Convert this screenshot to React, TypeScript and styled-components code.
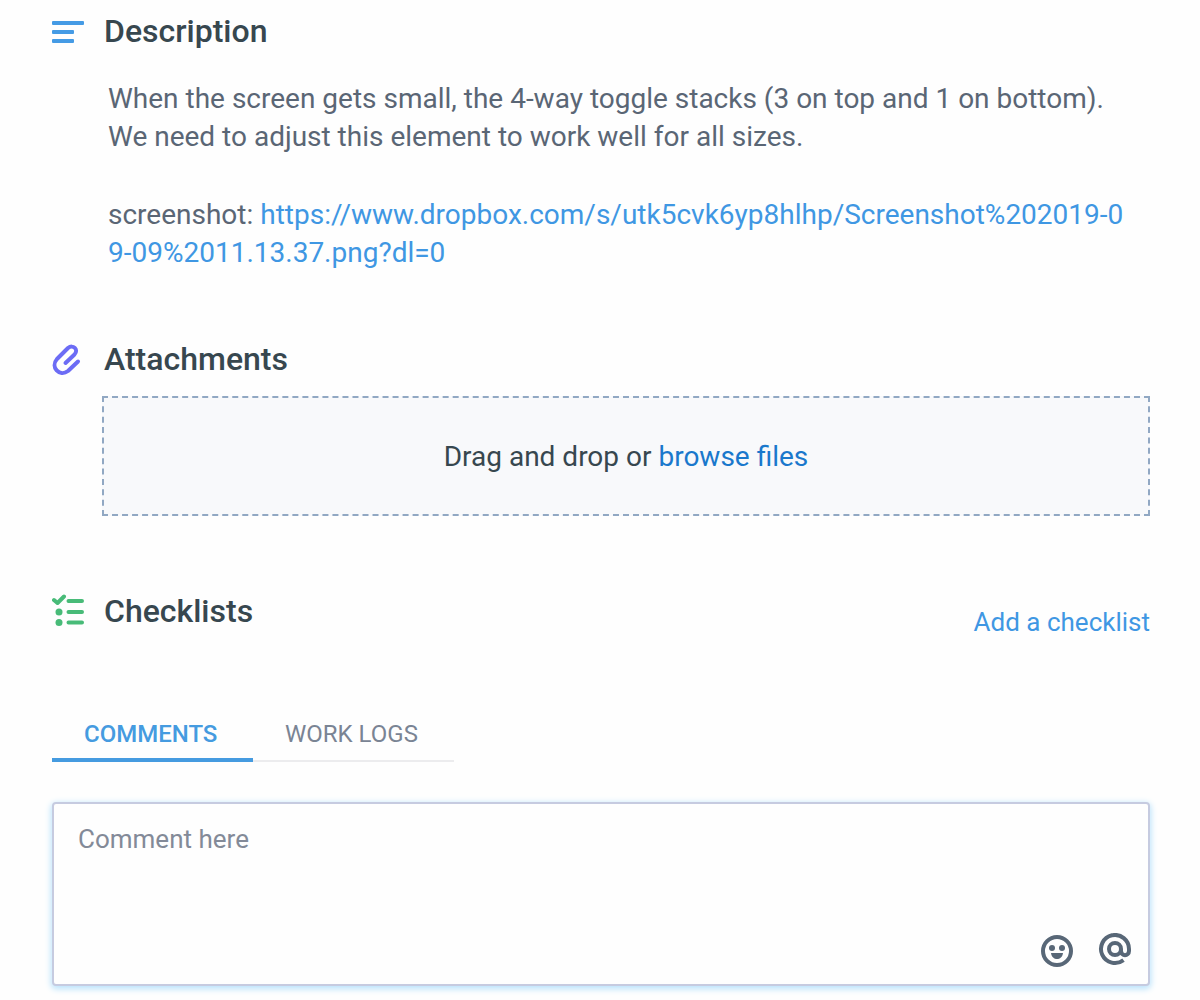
import React from "react";
import styled, { createGlobalStyle } from "styled-components";

const GlobalStyle = createGlobalStyle`
  *, *::before, *::after { box-sizing: border-box; }
  body {
    margin: 0;
    background: #fefefe;
    color: #37474f;
    font-family: Roboto, "Liberation Sans", sans-serif;
  }
`;

const Page = styled.main`
  padding: 11px 50px 14px 52px;
`;

const Section = styled.section<{ $space: number }>`
  margin-bottom: ${(p) => p.$space}px;
`;

const Header = styled.header`
  display: flex;
  align-items: center;
  height: 40px;
`;

const IconSlot = styled.span`
  display: flex;
  flex: none;
  width: 52px;
`;

const Title = styled.h2`
  flex: 1;
  margin: 0;
  font-size: 32px;
  line-height: 40px;
  font-weight: 500;
  color: #37474f;
`;

const Body = styled.div`
  display: flex;
  flex-direction: column;
  gap: 40px;
  padding: 29px 24px 0 56px;
  font-size: 28px;
  line-height: 38px;
  color: #5a6675;
`;

const Paragraph = styled.p`
  margin: 0;
`;

const Link = styled.a`
  color: #3f97e3;
  text-decoration: none;
  word-break: break-all;
`;

const DropZone = styled.div`
  display: flex;
  align-items: center;
  justify-content: center;
  gap: 7px;
  height: 120px;
  margin: 17px 0 0 50px;
  border: 2px dashed #91a8c3;
  background: #f8f9fb;
  font-size: 28px;
`;

const TextButton = styled.button<{ $color: string; $size: number }>`
  padding: 0;
  border: 0;
  background: none;
  font: inherit;
  font-size: ${(p) => p.$size}px;
  font-weight: 400;
  color: ${(p) => p.$color};
  cursor: pointer;
`;

const ChecklistHeader = styled(Header)`
  height: 51px;
  align-items: flex-start;
`;

const ChecklistAction = styled.div`
  align-self: flex-end;
  display: flex;
  line-height: 40px;
`;

const ChecklistIcon = styled(IconSlot)`
  height: 40px;
  align-items: center;
`;

const Tabs = styled.div`
  display: flex;
  margin-bottom: 40px;
`;

const Tab = styled.button<{ $active?: boolean }>`
  width: 201px;
  height: 56px;
  padding: 4px 32px ${(p) => (p.$active ? 0 : 2)}px;
  border: 0;
  border-bottom: ${(p) => (p.$active ? "4px solid #459be0" : "2px solid #ececee")};
  background: none;
  font: inherit;
  font-size: 24px;
  font-weight: ${(p) => (p.$active ? 500 : 400)};
  text-align: left;
  white-space: nowrap;
  color: ${(p) => (p.$active ? "#459be0" : "#7a8494")};
  cursor: pointer;
`;

const Composer = styled.div`
  position: relative;
  display: flex;
`;

const CommentBox = styled.textarea`
  display: block;
  width: 100%;
  height: 184px;
  padding: 19px 24px;
  border: 2px solid #c6cbe0;
  border-radius: 4px;
  outline: 0;
  resize: none;
  background: #fefefe;
  box-shadow: 0 2px 6px 1px #b9e2fb;
  font: inherit;
  font-size: 26px;
  line-height: 32px;
  color: #37474f;
  &::placeholder { color: #838a98; opacity: 1; }
`;

const Tools = styled.div`
  position: absolute;
  right: 18px;
  bottom: 19px;
  display: flex;
  gap: 24px;
`;

const ToolButton = styled.button`
  display: flex;
  padding: 0;
  border: 0;
  background: none;
  color: #586777;
  cursor: pointer;
`;

const LinesIcon = () => (
  <svg width="32" height="24" viewBox="0 0 32 24" fill="#459be5" aria-hidden="true">
    <rect x="0" y="2" width="32" height="4" rx="1" />
    <rect x="0" y="11" width="22" height="4" rx="1" />
    <rect x="0" y="20" width="22" height="4" rx="1" />
  </svg>
);

const ClipIcon = () => (
  <svg width="32" height="36" viewBox="0 0 32 36" fill="none" stroke="#6c6cf5" strokeWidth="4" strokeLinecap="round" strokeLinejoin="round" aria-hidden="true">
    <path d="M13.500 22 22.500 13.500C27 8.500 21 3 16 7L5 18C-2 26 7.500 36.500 16 30L26 20.500" />
  </svg>
);

const ChecksIcon = () => (
  <svg width="32" height="34" viewBox="0 0 32 34" fill="none" stroke="#48bb78" strokeWidth="4" strokeLinecap="round" strokeLinejoin="round" aria-hidden="true">
    <path d="M2 6 5.500 9 12 2.500M16.500 7h13.500M16.500 18h13.500M16.500 28.500h13.500" />
    <circle cx="7" cy="18" r="3.500" fill="#48bb78" stroke="none" />
    <circle cx="7" cy="28.500" r="3.500" fill="#48bb78" stroke="none" />
  </svg>
);

const SmileIcon = () => (
  <svg width="34" height="34" viewBox="0 0 34 34" fill="currentColor" aria-hidden="true">
    <circle cx="17" cy="18" r="14" fill="none" stroke="currentColor" strokeWidth="4" />
    <circle cx="12" cy="15" r="3" />
    <circle cx="22" cy="15" r="3" />
    <path d="M11 20h12c-1 8-11 8-12 0z" />
  </svg>
);

const AtIcon = () => (
  <svg width="34" height="34" viewBox="0 0 34 34" fill="none" stroke="currentColor" strokeWidth="4" aria-hidden="true">
    <circle cx="17" cy="16" r="6" />
    <path d="M25.500 27.100A14 14 0 1 1 31 16v2c0 5.500-8 5.500-8 0v-2" />
  </svg>
);

export default function App() {
  return (
    <>
      <GlobalStyle />
      <Page>
        <Section $space={67}>
          <Header>
            <IconSlot><LinesIcon /></IconSlot>
            <Title>Description</Title>
          </Header>
          <Body>
            <Paragraph>
              When the screen gets small, the 4-way toggle stacks (3 on top and 1 on bottom).
              <br />
              We need to adjust this element to work well for all sizes.
            </Paragraph>
            <Paragraph>
              screenshot:{" "}
              <Link href="https://www.dropbox.com/s/utk5cvk6yp8hlhp/Screenshot%202019-09-09%2011.13.37.png?dl=0">
                https://www.dropbox.com/s/utk5cvk6yp8hlhp/Screenshot%202019-09-09%2011.13.37.png?dl=0
              </Link>
            </Paragraph>
          </Body>
        </Section>

        <Section $space={75}>
          <Header>
            <IconSlot><ClipIcon /></IconSlot>
            <Title>Attachments</Title>
          </Header>
          <DropZone>
            <span>Drag and drop or</span>
            <TextButton type="button" $color="#1a78cc" $size={28}>browse files</TextButton>
          </DropZone>
        </Section>

        <Section $space={64}>
          <ChecklistHeader>
            <ChecklistIcon><ChecksIcon /></ChecklistIcon>
            <Title>Checklists</Title>
            <ChecklistAction>
              <TextButton type="button" $color="#3f97e3" $size={26}>Add a checklist</TextButton>
            </ChecklistAction>
          </ChecklistHeader>
        </Section>

        <Tabs role="tablist">
          <Tab type="button" role="tab" aria-selected="true" $active>COMMENTS</Tab>
          <Tab type="button" role="tab" aria-selected="false">WORK LOGS</Tab>
        </Tabs>

        <Composer>
          <CommentBox aria-label="Comment" placeholder="Comment here" />
          <Tools>
            <ToolButton type="button" aria-label="Insert emoji"><SmileIcon /></ToolButton>
            <ToolButton type="button" aria-label="Mention someone"><AtIcon /></ToolButton>
          </Tools>
        </Composer>
      </Page>
    </>
  );
}
